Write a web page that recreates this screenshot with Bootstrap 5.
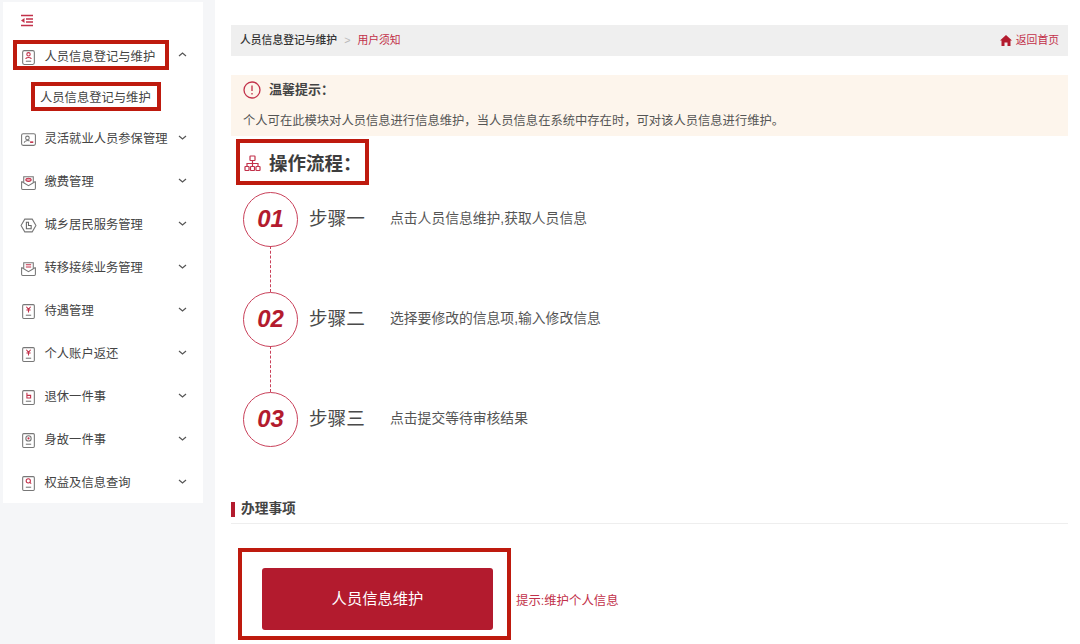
<!DOCTYPE html>
<html lang="zh-CN">
<head>
    <meta charset="UTF-8">
    <meta name="viewport" content="width=device-width, initial-scale=1.0">
    <title>用户须知</title>
    <link href="https://cdn.jsdelivr.net/npm/bootstrap@5.3.0/dist/css/bootstrap.min.css" rel="stylesheet">
    <style>
        html, body { height: 644px; overflow: hidden; }
        body {
            font-family: "Liberation Sans", "Noto Sans CJK SC", sans-serif;
            background: #fff;
            color: #444;
        }
        .page-wrap { height: 644px; }
        .side-col { width: 215px; flex: none; background: #f5f6f8; padding: 2px 12px 0 3px; }
        .side-panel { background: #fff; height: 501px; }
        .side-top { height: 34px; padding: 10px 0 0 17px; line-height: 1; }
        .menu-row { height: 43px; display: flex; align-items: center; padding-left: 17px; font-size: 12.3px; color: #444; position: relative; }
        .menu-row svg.mi { width: 17px; height: 17px; margin-right: 7.5px; flex: none; }
        .menu-row svg.chev { position: absolute; left: 175px; top: 16px; width: 9px; height: 7px; }
        .first-row { height: 42px; }
        .first-row svg.chev { top: 15px; }
        .sub-row { height: 40px; padding-left: 37px; font-size: 12.3px; color: #444; }
        .mark-box { border: 4px solid #be1a0e; position: absolute; pointer-events: none; }
        .mark-menu { left: 10px; top: 4px; width: 156px; height: 30px; }
        .mark-sub { left: 28px; top: 4px; width: 130px; height: 29px; }
        .main-col { flex: 1; padding: 25px 12px 0 16px; }
        .crumb-bar { height: 31px; background: #efefef; padding: 0 9px; font-size: 10.8px; }
        .crumb-bar b { color: #333; font-weight: 500; }
        .crumb-sep { color: #b9b9b9; margin: 0 7px; }
        .crumb-red, .home-link { color: #c2314a; }
        .tip-box { margin-top: 19px; height: 61px; background: #fdf5ec; padding: 6px 12px; position: relative; }
        .tip-title { font-size: 13px; font-weight: 700; color: #444; height: 18px; }
        .tip-text { font-size: 12.3px; color: #555; margin-top: 14px; line-height: 17px; white-space: nowrap; }
        .flow-head { height: 49px; position: relative; padding: 6px 0 0 13px; font-size: 18.5px; font-weight: 700; color: #3d3d3d; }
        .flow-mark { left: 5px; top: 3px; width: 133px; height: 46px; }
        .step-wrap { padding-left: 12px; margin-top: 7px; }
        .step-row { height: 54px; }
        .step-no {
            width: 55px; height: 55px; flex: none; border: 1px solid #c9415a; border-radius: 50%;
            color: #b31b2e; font-size: 24px; font-weight: 700; font-style: italic;
        }
        .step-name { font-size: 18.6px; color: #4a4a4a; margin-left: 11px; width: 81px; }
        .step-desc { font-size: 13.8px; color: #555; }
        .step-line { height: 46px; width: 0; margin-left: 27px; border-left: 1.5px dashed #c9415a; }
        .sec-head { margin-top: 47px; height: 31px; border-bottom: 1px solid #eee; font-size: 13.7px; font-weight: 700; color: #444; padding-top: 2px; }
        .sec-bar { width: 4px; height: 15px; background: #b31b2e; margin-right: 6px; }
        .act-row { margin-top: 24px; padding-left: 7px; }
        .act-box { width: 273px; height: 92px; border: 4px solid #be1a0e; padding: 16px 0 0 20px; }
        .act-btn { width: 231px; height: 62px; background: #b31b2e; color: #fff; border: 0; border-radius: 3px; font-size: 15.3px; padding: 0; }
        .act-hint { font-size: 12.4px; color: #c2314a; margin-left: 5px; margin-top: 14px; }
    </style>
</head>
<body>
<div class="d-flex page-wrap">
    <!-- 左侧菜单 -->
    <div class="side-col">
        <div class="side-panel">
            <div class="side-top">
                <svg width="14" height="13" viewBox="0 0 14 13" fill="none" stroke="#c2314a" stroke-width="1.300"><path d="M1 1.500h12M6 5h7M6 8h7M1 11.500h12"/><path d="M4.500 4v5L1 6.500z" fill="#c2314a" stroke="none"/></svg>
            </div>
            <div class="menu-row first-row">
                <div class="mark-box mark-menu"></div>
                <svg class="mi" viewBox="0 0 16 16" fill="none" stroke="#777"><rect x="2.500" y="1.500" width="11" height="13" rx="1.500"/><circle cx="8" cy="5" r="1.600" stroke="#c2314a"/><path d="M5.500 9.500c0-2 5-2 5 0" stroke="#c2314a"/><path d="M5.500 11.500h5"/></svg>
                <span>人员信息登记与维护</span>
                <svg class="chev" viewBox="0 0 9 7" fill="none" stroke="#555" stroke-width="1.200"><path d="M1 5l3.500-3L8 5"/></svg>
            </div>
            <div class="menu-row sub-row"><div class="mark-box mark-sub"></div><span>人员信息登记与维护</span></div>
            <div class="menu-row">
                <svg class="mi" viewBox="0 0 16 16" fill="none" stroke="#777"><rect x="1.500" y="2.500" width="13" height="11" rx="1.500"/><circle cx="7" cy="6.500" r="1.700"/><path d="M4 11c0-2 4-2.500 5-1.500"/><path d="M9.500 10.500h3" stroke="#c2314a" stroke-width="1.500"/></svg>
                <span>灵活就业人员参保管理</span>
                <svg class="chev" viewBox="0 0 9 7" fill="none" stroke="#555" stroke-width="1.200"><path d="M1 2l3.500 3L8 2"/></svg>
            </div>
            <div class="menu-row">
                <svg class="mi" viewBox="0 0 16 16" fill="none" stroke="#777"><path d="M1.500 7v6.500a1 1 0 0 0 1 1h11a1 1 0 0 0 1-1V7"/><path d="M3.500 8V2.500h9V8"/><path d="M1.500 7l6.500 4 6.500-4"/><ellipse cx="8" cy="5.500" rx="2.500" ry="1.500" stroke="#c2314a" fill="#e9a3b0"/></svg>
                <span>缴费管理</span>
                <svg class="chev" viewBox="0 0 9 7" fill="none" stroke="#555" stroke-width="1.200"><path d="M1 2l3.500 3L8 2"/></svg>
            </div>
            <div class="menu-row">
                <svg class="mi" viewBox="0 0 16 16" fill="none" stroke="#777"><path d="M4.500 2h7L15 8l-3.500 6h-7L1 8z"/><path d="M6 5v6h4.500V8H8V5z" stroke="#666"/></svg>
                <span>城乡居民服务管理</span>
                <svg class="chev" viewBox="0 0 9 7" fill="none" stroke="#555" stroke-width="1.200"><path d="M1 2l3.500 3L8 2"/></svg>
            </div>
            <div class="menu-row">
                <svg class="mi" viewBox="0 0 16 16" fill="none" stroke="#777"><path d="M1.500 7v6.500a1 1 0 0 0 1 1h11a1 1 0 0 0 1-1V7"/><path d="M3.500 8V2.500h9V8"/><path d="M1.500 7l6.500 4 6.500-4"/><path d="M5.500 4.500h5M5.500 6.500h5" stroke="#c2314a"/></svg>
                <span>转移接续业务管理</span>
                <svg class="chev" viewBox="0 0 9 7" fill="none" stroke="#555" stroke-width="1.200"><path d="M1 2l3.500 3L8 2"/></svg>
            </div>
            <div class="menu-row">
                <svg class="mi" viewBox="0 0 16 16" fill="none" stroke="#777"><rect x="2.500" y="1.500" width="11" height="13" rx="1"/><path d="M6 3.500l2 2.500 2-2.500M6 6.500h4M8 6v3" stroke="#c2314a"/><path d="M5.500 11.500h5"/></svg>
                <span>待遇管理</span>
                <svg class="chev" viewBox="0 0 9 7" fill="none" stroke="#555" stroke-width="1.200"><path d="M1 2l3.500 3L8 2"/></svg>
            </div>
            <div class="menu-row">
                <svg class="mi" viewBox="0 0 16 16" fill="none" stroke="#777"><rect x="2.500" y="1.500" width="11" height="13" rx="1"/><path d="M6 3.500l2 2.500 2-2.500M6 6.500h4M8 6v3" stroke="#c2314a"/><path d="M5.500 11.500h5"/></svg>
                <span>个人账户返还</span>
                <svg class="chev" viewBox="0 0 9 7" fill="none" stroke="#555" stroke-width="1.200"><path d="M1 2l3.500 3L8 2"/></svg>
            </div>
            <div class="menu-row">
                <svg class="mi" viewBox="0 0 16 16" fill="none" stroke="#777"><rect x="2.500" y="1.500" width="11" height="13" rx="1"/><path d="M6.500 3.500v5h3.500V6H6.500" stroke="#c2314a"/><path d="M5.500 11.500h5"/></svg>
                <span>退休一件事</span>
                <svg class="chev" viewBox="0 0 9 7" fill="none" stroke="#555" stroke-width="1.200"><path d="M1 2l3.500 3L8 2"/></svg>
            </div>
            <div class="menu-row">
                <svg class="mi" viewBox="0 0 16 16" fill="none" stroke="#777"><rect x="2.500" y="1.500" width="11" height="13" rx="1"/><circle cx="8" cy="6" r="2.500"/><circle cx="8" cy="6" r="1" fill="#c2314a" stroke="none"/><path d="M5.500 11.500h5"/></svg>
                <span>身故一件事</span>
                <svg class="chev" viewBox="0 0 9 7" fill="none" stroke="#555" stroke-width="1.200"><path d="M1 2l3.500 3L8 2"/></svg>
            </div>
            <div class="menu-row">
                <svg class="mi" viewBox="0 0 16 16" fill="none" stroke="#777"><rect x="2.500" y="1.500" width="11" height="13" rx="1"/><circle cx="7.800" cy="5.500" r="2" stroke="#c2314a"/><path d="M9.300 7l1.200 1.200" stroke="#c2314a"/><path d="M5.500 11.500h5"/></svg>
                <span>权益及信息查询</span>
                <svg class="chev" viewBox="0 0 9 7" fill="none" stroke="#555" stroke-width="1.200"><path d="M1 2l3.500 3L8 2"/></svg>
            </div>
        </div>
    </div>

    <!-- 主体内容 -->
    <div class="main-col">
        <div class="crumb-bar d-flex align-items-center justify-content-between">
            <div><b>人员信息登记与维护</b><span class="crumb-sep">&gt;</span><span class="crumb-red">用户须知</span></div>
            <div class="home-link d-flex align-items-center">
                <svg class="me-1" width="12" height="11" viewBox="0 0 12 11" fill="#b31b2e"><path d="M6 0L0 5.500h1.500V11h3V7.500h3V11h3V5.500H12z"/></svg>
                <span>返回首页</span>
            </div>
        </div>

        <div class="tip-box">
            <div class="tip-title d-flex align-items-center">
                <svg class="me-2" width="18" height="18" viewBox="0 0 18 18" fill="none" stroke="#c2314a" stroke-width="1.300"><circle cx="9" cy="9" r="8"/><path d="M9 4.500v5.500M9 12v1.500"/></svg>
                <span>温馨提示：</span>
            </div>
            <div class="tip-text">个人可在此模块对人员信息进行信息维护，当人员信息在系统中存在时，可对该人员信息进行维护。</div>
        </div>

        <div class="flow-head d-flex align-items-center">
            <div class="mark-box flow-mark"></div>
            <svg class="me-2" width="17" height="17" viewBox="0 0 17 17" fill="none" stroke="#c2314a" stroke-width="1.200"><rect x="6" y="1" width="5" height="4.500" rx=".5"/><rect x="1" y="11.500" width="4" height="4" rx=".5"/><rect x="6.500" y="11.500" width="4" height="4" rx=".5"/><rect x="12" y="11.500" width="4" height="4" rx=".5"/><path d="M8.500 5.500v6M3 11.500V8.500h11v3"/></svg>
            <span>操作流程：</span>
        </div>

        <div class="step-wrap">
            <div class="step-row d-flex align-items-center">
                <div class="step-no d-flex align-items-center justify-content-center">01</div>
                <div class="step-name">步骤一</div>
                <div class="step-desc">点击人员信息维护,获取人员信息</div>
            </div>
            <div class="step-line"></div>
            <div class="step-row d-flex align-items-center">
                <div class="step-no d-flex align-items-center justify-content-center">02</div>
                <div class="step-name">步骤二</div>
                <div class="step-desc">选择要修改的信息项,输入修改信息</div>
            </div>
            <div class="step-line"></div>
            <div class="step-row d-flex align-items-center">
                <div class="step-no d-flex align-items-center justify-content-center">03</div>
                <div class="step-name">步骤三</div>
                <div class="step-desc">点击提交等待审核结果</div>
            </div>
        </div>

        <div class="sec-head d-flex align-items-center">
            <span class="sec-bar"></span>
            <span>办理事项</span>
        </div>

        <div class="act-row d-flex align-items-center">
            <div class="act-box"><button type="button" class="act-btn">人员信息维护</button></div>
            <div class="act-hint">提示:维护个人信息</div>
        </div>
    </div>
</div>
<script src="https://cdn.jsdelivr.net/npm/bootstrap@5.3.0/dist/js/bootstrap.bundle.min.js"></script>
</body>
</html>
